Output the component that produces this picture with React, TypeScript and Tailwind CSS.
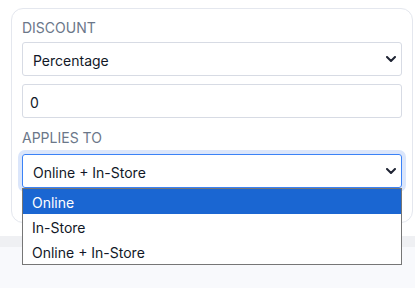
import { useState } from "react";

const options = ["Online", "In-Store", "Online + In-Store"];

function Chevron() {
  return (
    <svg width="10" height="6" viewBox="0 0 10 6" fill="none" className="shrink-0">
      <path d="M1 1L5 5L9 1" stroke="#1f2433" strokeWidth="2" strokeLinecap="round" strokeLinejoin="round" />
    </svg>
  );
}

export default function App() {
  const [discountType] = useState("Percentage");
  const [amount] = useState("0");
  const [applies] = useState("Online + In-Store");
  const [highlighted] = useState(0);

  return (
    <div className="w-[415px] h-[288px] overflow-hidden bg-[#f8f9fc] font-['Inter',sans-serif] text-[#111827] flex flex-col">
      <div className="h-[236px] bg-white pl-[11px] pr-[2px] pt-[8px]">
        <div className="h-[215px] border border-[#e4e7ee] rounded-[12px] px-[10px] pt-[9px]">
          <div className="text-[14px] leading-[20px] uppercase text-[#6b7789] mb-1">Discount</div>
          <div className="h-[34px] border border-[#d7dbe4] rounded-[3px] flex items-center pl-[10px] pr-[5px] justify-between">
            <span className="text-[14px] pt-[3px]">{discountType}</span>
            <Chevron />
          </div>
          <div className="mt-[8px] h-[34px] border border-[#d7dbe4] rounded-[3px] flex items-center pl-[7px]">
            <span className="text-[14px] pt-[3px]">{amount}</span>
          </div>
          <div className="mt-[10px] text-[14px] leading-[20px] uppercase text-[#6b7789] mb-[6px]">Applies to</div>
          <div className="relative">
            <div className="h-[34px] border border-[#3b82f6] rounded-[3px] ring-4 ring-[#dbe6fb] flex items-center pl-[10px] pr-[5px] justify-between">
              <span className="text-[14px] pt-[3px]">{applies}</span>
              <Chevron />
            </div>
            <div className="absolute left-0 right-0 top-[34px] bg-white border border-[#767676] z-10">
              {options.map((o, i) => (
                <div
                  key={o}
                  className={`h-[25px] flex items-center pl-[9px] pt-[1px] text-[14px] ${i === highlighted ? "bg-[#1a66d2] text-white" : "text-[#111827]"}`}
                >
                  {o}
                </div>
              ))}
            </div>
          </div>
        </div>
      </div>
      <div className="h-[11px] bg-[#eff0f3]" />
    </div>
  );
}
